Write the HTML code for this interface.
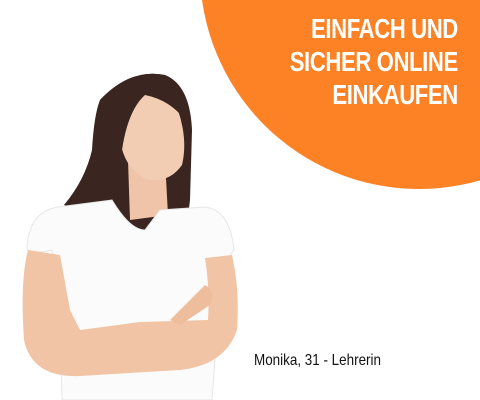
<!DOCTYPE html>
<html><head><meta charset="utf-8"><style>
html,body{margin:0;padding:0;background:#fff;width:480px;height:400px;overflow:hidden;position:relative}
.t{position:absolute;right:22px;top:12px;text-align:right;color:#fff;font-family:"Liberation Sans",sans-serif;font-weight:bold;font-size:28px;line-height:33px;letter-spacing:-0.5px;transform:scaleX(0.79);transform-origin:right top}
.c{position:absolute;left:254px;top:352px;font-family:"Liberation Sans",sans-serif;font-size:16px;color:#111;transform:scaleX(0.84);transform-origin:left top;white-space:nowrap}
svg{position:absolute;left:0;top:0}
</style></head><body>
<svg width="480" height="400" viewBox="0 0 480 400">
<circle cx="419" cy="-30" r="219" fill="#fd8125"/>
<path d="M100 100 Q130 68 165 75 Q190 85 192 130 L190 200 Q186 240 170 262 L150 240 L120 230 Q90 215 64 205 Q85 180 92 150 Q94 115 100 100Z" fill="#3a2520"/>
<path d="M128 160 L165 160 L168 215 L130 220Z" fill="#efc4a8"/>
<path d="M125 100 Q150 80 178 110 Q188 140 182 165 Q170 182 150 180 Q125 172 120 140Z" fill="#f2cdb3"/>
<path d="M100 100 Q130 68 165 75 Q190 88 185 120 Q170 100 145 95 Q128 110 122 150 L118 200 L105 205Z" fill="#3a2520"/>
<path d="M58 207 L112 200 Q130 230 145 230 L160 210 L205 207 Q230 210 234 250 L225 262 L215 360 L212 400 L62 400 L60 320 L52 250 Q30 255 27 250 Q28 212 58 207Z" fill="#fbfbfb" stroke="#e6e6e6"/>
<path d="M28 250 Q20 280 24 340 Q32 378 80 376 L180 370 Q225 365 237 330 Q240 290 232 255 L205 258 Q210 290 208 320 L140 322 L80 330 L70 310 L60 255Z" fill="#f0c4a4"/>
<path d="M205 285 Q215 290 210 305 L180 325 L170 320Z" fill="#edbd9c"/>
</svg>
<div class="t">EINFACH UND<br>SICHER ONLINE<br>EINKAUFEN</div>
<div class="c">Monika, 31 - Lehrerin</div>
</body></html>
